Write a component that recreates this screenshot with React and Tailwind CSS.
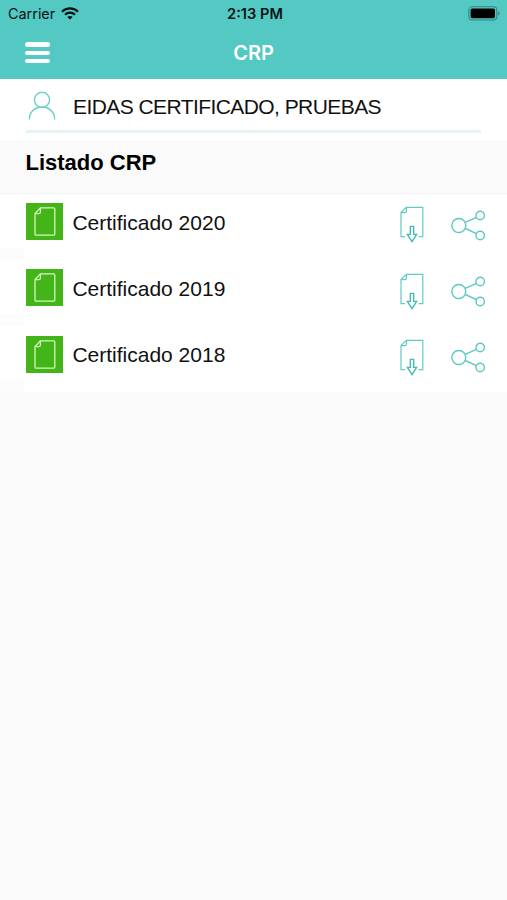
const certificates = [
  { id: 2020, name: 'Certificado 2020' },
  { id: 2019, name: 'Certificado 2019' },
  { id: 2018, name: 'Certificado 2018' },
]

function WifiIcon() {
  return (
    <svg width="18" height="13" viewBox="0 0 18 13" fill="none" stroke="#061413">
      <path d="M1 4.7C5.5 0.2 12.5 0.2 17 4.7" strokeWidth="2.3" />
      <path d="M4 7.8C6.9 5 11.1 5 14 7.8" strokeWidth="2.2" />
      <path d="M9 12.6L6.3 9.9C7.9 8.6 10.1 8.6 11.7 9.9Z" fill="#061413" stroke="none" />
    </svg>
  )
}

function BatteryIcon() {
  return (
    <svg width="33" height="15" viewBox="0 0 33 15" fill="none">
      <rect x="0.8" y="0.8" width="28" height="13.2" rx="3.4" stroke="#338480" strokeWidth="1.1" />
      <rect x="2.6" y="2.6" width="24.4" height="9.6" rx="1.6" fill="#000" />
      <path d="M30.2 5.2C32.2 6 32.2 8.8 30.2 9.6Z" fill="#338480" />
    </svg>
  )
}

function UserIcon() {
  return (
    <svg width="28" height="30" viewBox="0 0 28 30" fill="none" stroke="#6fd0c8" strokeWidth="1.4">
      <circle cx="14" cy="8.8" r="7.6" />
      <path d="M1.3 28.5C1.3 11.8 26.7 11.8 26.7 28.5" />
    </svg>
  )
}

function DocumentIcon() {
  return (
    <svg width="37" height="37" viewBox="0 0 37 37" fill="none" stroke="#d3f5bd" strokeWidth="1.3">
      <path d="M14.4 4.8H27.6Q28.8 4.8 28.8 6V31Q28.8 32.2 27.6 32.2H10.2Q9 32.2 9 31V10.6Z" />
      <path d="M14.4 4.8V9Q14.4 10.6 12.8 10.6H9" />
    </svg>
  )
}

function DownloadIcon() {
  return (
    <svg width="24" height="37" viewBox="0 0 24 37" fill="none" stroke="#62cbc2" strokeWidth="1.2">
      <path d="M5 30.6H1V6.6L6.4 1.4H22.8V30.6H18.6" />
      <path d="M6.4 1.4V5.2Q6.4 6.6 5 6.6H1" />
      <path d="M10.3 20.4H13.7V28.4H16.6L12 35.6L7.4 28.4H10.3Z" stroke="#43beb4" strokeWidth="1.4" />
    </svg>
  )
}

function ShareIcon() {
  return (
    <svg width="35" height="31" viewBox="0 0 35 31" fill="none" stroke="#5cc9c0" strokeWidth="1.4">
      <circle cx="7.8" cy="15.5" r="7" />
      <circle cx="29.2" cy="5.5" r="4.2" />
      <circle cx="29.2" cy="25.5" r="4.2" />
      <path d="M14.3 12.4L25.4 7.3M14.3 18.5L25.4 23.6" />
    </svg>
  )
}

export default function App() {
  return (
    <div className="h-[900px] w-[507px] overflow-hidden bg-[#fafafa] font-['Liberation_Sans',Arial,sans-serif] text-[#111]">
      {/* Header */}
      <header className="h-[79px] bg-[#54c8c3]">
        <div className="grid h-[27px] grid-cols-3 items-center pr-[6px] pl-[8px] font-['Inter',sans-serif] text-[#061413]">
          <div className="flex items-center gap-[6px]">
            <span className="pt-[2px] text-[14.4px] leading-none">Carrier</span>
            <WifiIcon />
          </div>
          <span className="pt-[2px] pl-px text-center text-[14.6px] leading-none font-semibold whitespace-nowrap">
            2:13 PM
          </span>
          <div className="flex justify-end">
            <BatteryIcon />
          </div>
        </div>
        <div className="grid h-[51px] grid-cols-3 items-center px-[25px]">
          <button type="button" aria-label="Menu" className="mb-px flex w-[25px] flex-col gap-[4px]">
            <span className="h-[5px] rounded-full bg-white" />
            <span className="h-[4px] rounded-full bg-white" />
            <span className="h-[4px] rounded-full bg-white" />
          </button>
          <h1 className="text-center font-['Inter',sans-serif] text-[20px] leading-none font-semibold text-white">
            CRP
          </h1>
        </div>
      </header>

      {/* Account holder */}
      <section className="h-[61px] bg-white px-[26px]">
        <div className="flex h-[54px] items-center gap-[17px] border-b-[3px] border-[#e2f5f3] pt-[2px] pl-[2px]">
          <UserIcon />
          <span className="pt-px text-[21px] leading-none tracking-[-0.57px] whitespace-nowrap">
            EIDAS CERTIFICADO, PRUEBAS
          </span>
        </div>
      </section>

      {/* List title */}
      <div className="h-[53.5px] border-b border-[#f3f3f3] pt-[11px] pl-[25.5px]">
        <h2 className="text-[22px] leading-[24px] font-bold text-black">Listado CRP</h2>
      </div>

      {/* Certificates */}
      <ul>
        {certificates.map((cert) => (
          <li key={cert.id} className="relative flex h-[66.3px] items-start bg-white pt-[9.7px] pl-[26.4px]">
            <span className="absolute bottom-0 left-0 h-[12px] w-[24px] bg-[#fcfcfc]" />
            <span className="h-[37px] w-[37px] bg-[#43b518]">
              <DocumentIcon />
            </span>
            <span className="ml-[9px] w-[327.6px] pt-[0.6px] text-[21px] leading-[37px]">{cert.name}</span>
            <button type="button" aria-label="Descargar" className="mt-[3.3px]">
              <DownloadIcon />
            </button>
            <button type="button" aria-label="Compartir" className="mt-[6.5px] ml-[27px]">
              <ShareIcon />
            </button>
          </li>
        ))}
      </ul>
    </div>
  )
}
